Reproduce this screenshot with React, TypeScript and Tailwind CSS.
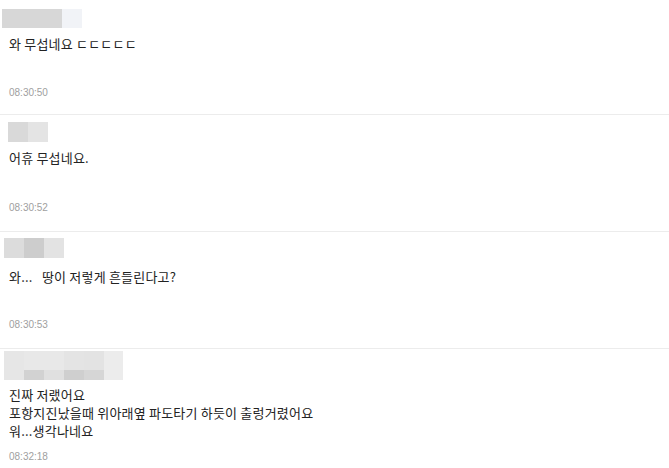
const comments = [
  {
    id: 1,
    blocks: [
      { w: "w-[60px]", c: "bg-[#d7d7d7]" },
      { w: "w-[20px]", c: "bg-[#f1f3f7]" },
    ],
    left: "ml-[2px]",
    pad: "pt-[9px]",
    nameH: "h-[19px]",
    textGap: "mt-[7px]",
    lines: ["와 무섭네요 ㄷㄷㄷㄷㄷ"],
    timeGap: "mt-[34px]",
    time: "08:30:50",
    h: "h-[115px]",
  },
  {
    id: 2,
    blocks: [
      { w: "w-[20px]", c: "bg-[#d9d9d9]" },
      { w: "w-[20px]", c: "bg-[#e4e4e4]" },
    ],
    left: "ml-[8px]",
    pad: "pt-[7px]",
    nameH: "h-[20px]",
    textGap: "mt-[7px]",
    lines: ["어휴 무섭네요."],
    timeGap: "mt-[35px]",
    time: "08:30:52",
    h: "h-[117px]",
  },
  {
    id: 3,
    blocks: [
      { w: "w-[20px]", c: "bg-[#dcdcdc]" },
      { w: "w-[20px]", c: "bg-[#cdcdcd]" },
      { w: "w-[20px]", c: "bg-[#e3e3e3]" },
    ],
    left: "ml-[4px]",
    pad: "pt-[6px]",
    nameH: "h-[20px]",
    textGap: "mt-[10px]",
    lines: ["와...   땅이 저렇게 흔들린다고?"],
    timeGap: "mt-[33px]",
    time: "08:30:53",
    h: "h-[117px]",
  },
  {
    id: 4,
    blocks: [],
    left: "ml-[4px]",
    pad: "pt-[2px]",
    nameH: "h-[29px]",
    textGap: "mt-[6px]",
    lines: [
      "진짜 저랬어요",
      "포항지진났을때 위아래옆 파도타기 하듯이 출렁거렸어요",
      "워...생각나네요",
    ],
    timeGap: "mt-[11px]",
    time: "08:32:18",
    h: "h-[119px]",
  },
];

const BigName = () => (
  <div className="flex flex-col w-[119px] h-[29px]">
    <div className="flex h-[19px]">
      <div className="w-[20px] bg-[#e6e6e6]" />
      <div className="w-[40px] bg-[#e8e8e8]" />
      <div className="w-[20px] bg-[#e4e4e4]" />
      <div className="w-[20px] bg-[#e3e3e3]" />
      <div className="w-[19px] bg-[#ececec]" />
    </div>
    <div className="flex h-[10px]">
      <div className="w-[20px] bg-[#e6e6e6]" />
      <div className="w-[20px] bg-[#d2d2d2]" />
      <div className="w-[20px] bg-[#e0e0e0]" />
      <div className="w-[20px] bg-[#cfcfcf]" />
      <div className="w-[20px] bg-[#d6d6d6]" />
      <div className="w-[19px] bg-[#ececec]" />
    </div>
  </div>
);

const App = () => {
  return (
    <div
      className="w-[669px] h-[468px] bg-white overflow-hidden text-[#222]"
      style={{ fontFamily: '"Noto Sans CJK KR", "Noto Sans", sans-serif' }}
    >
      {comments.map((c, i) => (
        <div
          key={c.id}
          className={`${c.h} ${c.pad} ${i < comments.length - 1 ? "border-b border-[#ececec]" : ""}`}
        >
          <div className={`${c.left} flex ${c.nameH}`}>
            {c.id === 4 ? (
              <BigName />
            ) : (
              c.blocks.map((b, j) => <div key={j} className={`${b.w} ${b.c}`} />)
            )}
          </div>
          <div className={`${c.textGap} pl-[9px] text-[13px] leading-[18px] tracking-[0.2px]`}>
            {c.lines.map((l) => (
              <p key={l} className="whitespace-pre">
                {l}
              </p>
            ))}
          </div>
          <p
            className={`${c.timeGap} pl-[9px] text-[10px] leading-[12px] text-[#a0a0a0]`}
            style={{ fontFamily: '"Liberation Sans", sans-serif' }}
          >
            {c.time}
          </p>
        </div>
      ))}
    </div>
  );
};

export default App;
